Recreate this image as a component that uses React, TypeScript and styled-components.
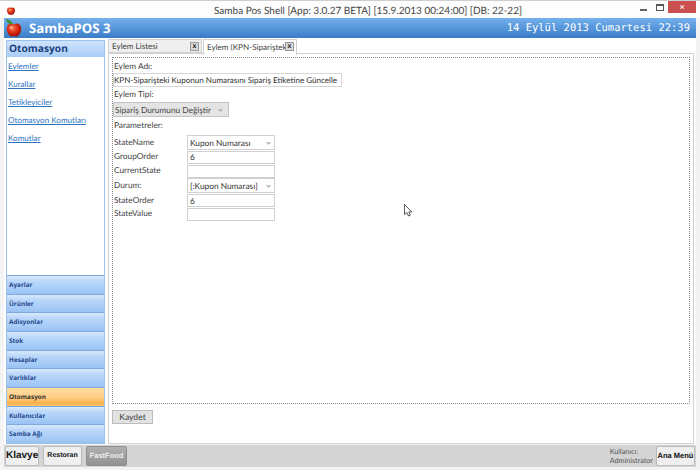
import React from "react";
import styled, { createGlobalStyle } from "styled-components";

const GlobalStyle = createGlobalStyle`
  html, body { margin: 0; padding: 0; background: #fff; }
  body {
    font-family: Lato, "Open Sans", sans-serif;
    color: #333;
    text-rendering: geometricPrecision;
  }
`;

const Shell = styled.div`
  position: relative;
  width: 700px;
  height: 470px;
  overflow: hidden;
  background: #f3f3f3;
  display: flex;
  flex-direction: column;
  box-sizing: border-box;
  border-top: 1px solid #cfcfcf;
`;

const TitleBar = styled.div`
  height: 17px;
  display: grid;
  grid-template-columns: 208px auto 1fr;
  align-items: center;
  background: #fdfdfd;
  padding-left: 6px;
`;

const TitleText = styled.div`
  font-size: 10px;
  color: #444;
  padding-top: 2px;
`;

const WinButtons = styled.div`
  display: flex;
  justify-content: flex-end;
  align-items: flex-start;
  align-self: start;
  margin-right: 4px;
`;

const WinMin = styled.div`
  width: 7px;
  height: 2px;
  margin: 8px 9px 0 0;
  background: #666;
`;

const WinMax = styled.div`
  width: 6px;
  height: 4px;
  margin: 3px 4px 0 0;
  border: 1px solid #555;
  border-top-width: 2px;
`;

const WinClose = styled.div`
  width: 28px;
  height: 12px;
  background: #c9504f;
  color: #fff;
  font-size: 9px;
  line-height: 12px;
  text-align: center;
  font-weight: 700;
`;

const Header = styled.div`
  margin: 0 4px;
  height: 20px;
  background: linear-gradient(#74b0ee, #3a7cc6);
  display: flex;
  align-items: center;
  justify-content: space-between;
  padding: 0 6px 0 1px;
  color: #fff;
`;

const Brand = styled.div`
  display: flex;
  align-items: center;
  gap: 6px;
  font-family: "Open Sans", sans-serif;
  font-weight: 700;
  font-size: 13.2px;
`;

const Clock = styled.div`
  font-family: "DejaVu Sans Mono", monospace;
  font-size: 10.5px;
`;

const Body = styled.div`
  flex: 1;
  display: flex;
  gap: 3px;
  padding: 1px 2px 0 2px;
  min-height: 0;
  background: #fff;
  margin: 0 4px;
`;

const Sidebar = styled.div`
  width: 99px;
  box-sizing: border-box;
  border: 1px solid #9cc0ec;
  background: #fff;
  display: flex;
  flex-direction: column;
  height: 404px;
  margin-top: 1px;
`;

const SideTitle = styled.div`
  height: 16px;
  line-height: 15px;
  padding-left: 2px;
  font-family: "Open Sans", sans-serif;
  font-size: 10.2px;
  font-weight: 700;
  color: #1c3f7d;
  background: linear-gradient(#cfe3fb, #a9cdf6);
`;

const LinkList = styled.div`
  flex: 1;
  display: flex;
  flex-direction: column;
  gap: 5px;
  padding: 3px 0 0 1px;
`;

const SideLink = styled.a`
  height: 13px;
  line-height: 13px;
  font-size: 8.1px;
  color: #2f74c4;
  text-decoration: underline;
`;

const NavGroup = styled.div`
  display: flex;
  flex-direction: column;
`;

const NavItem = styled.div<{ $active?: boolean }>`
  height: 18.7px;
  box-sizing: border-box;
  border-top: 1px solid #7fa9dc;
  padding-left: 2px;
  line-height: 18px;
  font-family: "Open Sans", sans-serif;
  font-size: 6.4px;
  font-weight: 700;
  color: ${(p) => (p.$active ? "#33302a" : "#24498f")};
  background: ${(p) =>
    p.$active
      ? "linear-gradient(#ffdc9c, #ffd08a 50%, #fdb04c 85%, #ffc76d)"
      : "linear-gradient(#d9e9fc, #b9d7fa 30%, #a9cdf8 70%, #99c2f2)"};
`;

const Main = styled.div`
  flex: 1;
  display: flex;
  flex-direction: column;
  min-width: 0;
  height: 405px;
`;

const TabStrip = styled.div`
  height: 14px;
  display: flex;
  gap: 1px;
`;

const Tab = styled.div<{ $active?: boolean }>`
  width: 94px;
  height: ${(p) => (p.$active ? "16px" : "14px")};
  box-sizing: border-box;
  display: flex;
  align-items: center;
  justify-content: space-between;
  overflow: hidden;
  white-space: nowrap;
  padding: ${(p) => (p.$active ? "0 2px 2px 3px" : "0 2px 0 3px")};
  font-size: 8.1px;
  color: #444;
  position: relative;
  z-index: ${(p) => (p.$active ? 2 : 0)};
  border: 1px solid #d0d0d0;
  border-bottom: ${(p) => (p.$active ? "none" : "1px solid #d0d0d0")};
  background: ${(p) => (p.$active ? "#fff" : "#efefef")};
`;

const TabLabel = styled.span`
  overflow: hidden;
  flex: 1;
`;

const TabClose = styled.span`
  flex: none;
  width: 9px;
  height: 9px;
  box-sizing: border-box;
  border: 1px solid #999;
  background: #d8d8d8;
  color: #222;
  font: 700 7px/7px "Liberation Sans", sans-serif;
  text-align: center;
`;

const Panel = styled.div`
  flex: 1;
  box-sizing: border-box;
  border: 1px solid #d2d2d2;
  background: #fff;
  padding: 3px;
  display: flex;
  flex-direction: column;
`;

const Dotted = styled.div`
  height: 347px;
  box-sizing: border-box;
  border: 1px dotted #888;
  display: flex;
  flex-direction: column;
  align-items: flex-start;
  padding: 1px 0 0 0;
`;

const Caption = styled.div`
  height: 14px;
  line-height: 15px;
  padding-left: 1px;
  font-size: 8.3px;
  color: #444;
`;

const NameInput = styled.div`
  width: 229px;
  height: 14px;
  box-sizing: border-box;
  border: 1px solid #d6d6d6;
  font-size: 8.05px;
  line-height: 12px;
  white-space: nowrap;
  overflow: hidden;
  color: #333;
`;

const TypeSelect = styled.div`
  width: 116px;
  height: 15px;
  box-sizing: border-box;
  margin: 1px 0;
  background: #e4e4e4;
  border: 1px solid #c4c4c4;
  display: flex;
  align-items: center;
  justify-content: space-between;
  padding: 0 6px 0 1px;
  font-size: 8.3px;
  white-space: nowrap;
  color: #444;
`;

const ParamGrid = styled.div`
  display: grid;
  grid-template-columns: 74px 88px;
  align-items: center;
  row-gap: 0.8px;
  margin-top: 3px;
`;

const ParamLabel = styled.div`
  padding: 0 0 2px 1px;
  font-size: 8.3px;
  color: #444;
`;

const ParamField = styled.div<{ $select?: boolean }>`
  height: ${(p) => (p.$select ? "15px" : "13px")};
  box-sizing: border-box;
  border: 1px solid #d0d0d0;
  display: flex;
  align-items: center;
  justify-content: space-between;
  padding: 0 4px 0 2px;
  font-size: 8.3px;
  white-space: nowrap;
  color: #333;
  background: #fff;
`;

const Chevron = styled.span`
  width: 2px;
  height: 2px;
  margin-top: -1px;
  border-right: 1px solid #999;
  border-bottom: 1px solid #999;
  transform: rotate(45deg);
`;

const SaveButton = styled.div`
  width: 41px;
  height: 14px;
  margin-top: 6px;
  box-sizing: border-box;
  background: #e2e2e2;
  border: 1px solid #bcbcbc;
  text-align: center;
  line-height: 12px;
  font-size: 8.6px;
  color: #444;
`;

const Footer = styled.div`
  margin: 1px 4px 3px 4px;
  height: 22px;
  background: #d4d4d4;
  display: flex;
  align-items: center;
  gap: 4px;
  padding: 0 1px;
`;

const FootButton = styled.div<{ $dark?: boolean; $w: number; $size: number }>`
  width: ${(p) => p.$w}px;
  height: 20px;
  box-sizing: border-box;
  border: 1px solid ${(p) => (p.$dark ? "#8e8e8e" : "#bbb")};
  border-radius: 2px;
  background: ${(p) => (p.$dark ? "linear-gradient(#b0b0b0, #929292)" : "#efefef")};
  color: ${(p) => (p.$dark ? "#eee" : "#111")};
  font-family: "Liberation Sans", sans-serif;
  font-weight: 700;
  font-size: ${(p) => p.$size}px;
  text-align: center;
  line-height: 18px;
  white-space: nowrap;
`;

const UserInfo = styled.div`
  margin-left: auto;
  margin-right: -1px;
  font-size: 7.2px;
  line-height: 9.5px;
  color: #555;
`;

const MouseCursor = styled.svg`
  position: absolute;
  left: 404px;
  top: 203px;
`;

function Apple({ size }: { size: number }) {
  return (
    <svg width={size} height={size} viewBox="0 0 20 20">
      <defs>
        <radialGradient id={`apple${size}`} cx="0.4" cy="0.35" r="0.7">
          <stop offset="0" stopColor="#f97a4a" />
          <stop offset="0.6" stopColor="#d3200f" />
          <stop offset="1" stopColor="#8e1206" />
        </radialGradient>
      </defs>
      <path d="M10 6C6 3.500 2 6 2 11c0 5 4 9 6 8.500 1-.3 3-.3 4 0 2 .5 6-3.500 6-8.500 0-5-4-7.500-8-5z" fill={`url(#apple${size})`} />
      {size > 12 && <path d="M9 6C8 3 5 1 1 0c1 3 3 6 8 6z" fill="#3e8e2f" />}
      <ellipse cx="7" cy="9.500" rx="2" ry="1.500" fill="#ffc9a8" opacity="0.7" />
    </svg>
  );
}

const links = ["Eylemler", "Kurallar", "Tetikleyiciler", "Otomasyon Komutları", "Komutlar"];
const navItems = ["Ayarlar", "Ürünler", "Adisyonlar", "Stok", "Hesaplar", "Varlıklar", "Otomasyon", "Kullanıcılar", "Samba Ağı"];
const params = [
  { label: "StateName", value: "Kupon Numarası", select: true },
  { label: "GroupOrder", value: "6" },
  { label: "CurrentState", value: "" },
  { label: "Durum:", value: "[:Kupon Numarası]", select: true },
  { label: "StateOrder", value: "6" },
  { label: "StateValue", value: "" },
];

export default function App() {
  return (
    <Shell>
      <GlobalStyle />
      <TitleBar>
        <Apple size={10} />
        <TitleText>Samba Pos Shell [App: 3.0.27 BETA] [15.9.2013 00:24:00] [DB: 22-22]</TitleText>
        <WinButtons>
          <WinMin />
          <WinMax />
          <WinClose>×</WinClose>
        </WinButtons>
      </TitleBar>
      <Header>
        <Brand>
          <Apple size={18} />
          SambaPOS 3
        </Brand>
        <Clock>14 Eylül 2013 Cumartesi 22:39</Clock>
      </Header>
      <Body>
        <Sidebar>
          <SideTitle>Otomasyon</SideTitle>
          <LinkList>
            {links.map((l) => (
              <SideLink key={l}>{l}</SideLink>
            ))}
          </LinkList>
          <NavGroup>
            {navItems.map((n) => (
              <NavItem key={n} $active={n === "Otomasyon"}>
                {n}
              </NavItem>
            ))}
          </NavGroup>
        </Sidebar>
        <Main>
          <TabStrip>
            <Tab>
              <TabLabel>Eylem Listesi</TabLabel>
              <TabClose>x</TabClose>
            </Tab>
            <Tab $active>
              <TabLabel>Eylem (KPN-Sipariştek</TabLabel>
              <TabClose>x</TabClose>
            </Tab>
          </TabStrip>
          <Panel>
            <Dotted>
              <Caption>Eylem Adı:</Caption>
              <NameInput>KPN-Siparişteki Kuponun Numarasını Sipariş Etiketine Güncelle</NameInput>
              <Caption>Eylem Tipi:</Caption>
              <TypeSelect>
                Sipariş Durumunu Değiştir
                <Chevron />
              </TypeSelect>
              <Caption>Parametreler:</Caption>
              <ParamGrid>
                {params.map((p) => (
                  <React.Fragment key={p.label}>
                    <ParamLabel>{p.label}</ParamLabel>
                    <ParamField $select={p.select}>
                      {p.value}
                      {p.select && <Chevron />}
                    </ParamField>
                  </React.Fragment>
                ))}
              </ParamGrid>
            </Dotted>
            <SaveButton>Kaydet</SaveButton>
          </Panel>
        </Main>
      </Body>
      <Footer>
        <FootButton $w={34} $size={10}>Klavye</FootButton>
        <FootButton $w={39} $size={7}>Restoran</FootButton>
        <FootButton $w={41} $size={7.5} $dark>FastFood</FootButton>
        <UserInfo>
          Kullanıcı:
          <br />
          Administrator
        </UserInfo>
        <FootButton $w={39} $size={7.5}>Ana Menü</FootButton>
      </Footer>
      <MouseCursor width="9" height="13" viewBox="0 0 9 13">
        <path d="M.5.500v10l2.500-2 1.500 3.500 1.800-.8-1.500-3.300h3z" fill="#fff" stroke="#333" strokeWidth="0.8" />
      </MouseCursor>
    </Shell>
  );
}
